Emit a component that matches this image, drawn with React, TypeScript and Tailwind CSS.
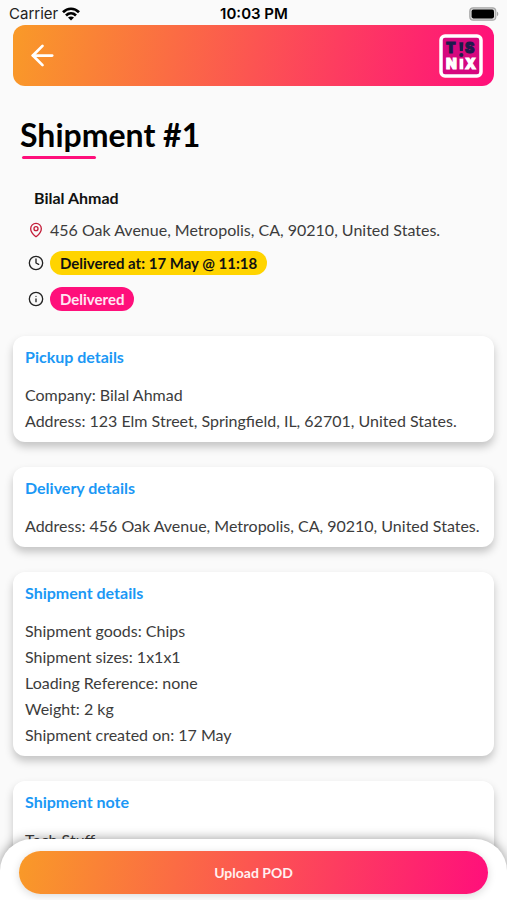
// Shipment detail screen — header, summary, detail cards and the upload bar

import type { ReactNode } from 'react';
import { ArrowLeft, Clock, Info, MapPin } from 'lucide-react';

interface DetailSection {
  title: string;
  lines: string[];
}

const SECTIONS: ReadonlyArray<DetailSection> = [
  {
    title: 'Pickup details',
    lines: ['Company: Bilal Ahmad', 'Address: 123 Elm Street, Springfield, IL, 62701, United States.'],
  },
  {
    title: 'Delivery details',
    lines: ['Address: 456 Oak Avenue, Metropolis, CA, 90210, United States.'],
  },
  {
    title: 'Shipment details',
    lines: [
      'Shipment goods: Chips',
      'Shipment sizes: 1x1x1',
      'Loading Reference: none',
      'Weight: 2 kg',
      'Shipment created on: 17 May',
    ],
  },
  { title: 'Shipment note', lines: ['Tech Stuff'] },
];

function WifiGlyph() {
  return (
    <svg width="18" height="14" viewBox="0 0 18 14" fill="none" stroke="#000" strokeWidth="2.7" aria-hidden="true">
      <path d="M1 5.2C5.6.6 12.4.6 17 5.2" />
      <path d="M4 8.5c2.9-2.8 7.1-2.8 10 0" />
      <path d="M9 13.6 6 10.6c1.7-1.6 4.3-1.6 6 0z" fill="#000" stroke="none" />
    </svg>
  );
}

function BatteryGlyph() {
  return (
    <svg width="30" height="14" viewBox="0 0 30 14" aria-hidden="true">
      <rect x="0.8" y="0.8" width="26" height="12.4" rx="3.5" fill="#d8d8d8" stroke="#a6a6a6" strokeWidth="1.2" />
      <rect x="2.6" y="2.6" width="22.4" height="8.8" rx="1.8" fill="#000" />
      <path d="M28 4.8c1.7.6 1.7 3.8 0 4.4z" fill="#a6a6a6" />
    </svg>
  );
}

function StatusBar() {
  return (
    <div className="grid h-[25px] shrink-0 grid-cols-3 items-center pt-0.5 pl-[9px] pr-2 font-['Inter',sans-serif] text-[15px] leading-5 text-[#222]">
      <div className="flex items-center gap-1">
        <span>Carrier</span>
        <WifiGlyph />
      </div>
      <span className="text-center font-semibold text-black">10:03 PM</span>
      <div className="flex justify-end">
        <BatteryGlyph />
      </div>
    </div>
  );
}

function Logo() {
  return (
    <svg width="44" height="44" viewBox="0 0 44 44" role="img" aria-label="Tisnix">
      <rect x="2" y="2" width="40" height="40" rx="4" fill="#d6087e" stroke="#fff" strokeWidth="3.5" />
      <g fontFamily="Inter, sans-serif" fontWeight="900" fontSize="14" strokeWidth="1">
        <text x="7" y="19" fill="#1d1b4c" stroke="#1d1b4c">T</text>
        <text x="26" y="19" fill="#1d1b4c" stroke="#1d1b4c">S</text>
        <text x="7" y="35" fill="#fff" stroke="#fff">N</text>
        <text x="26" y="35" fill="#fff" stroke="#fff">X</text>
      </g>
      <path d="M20.4 8.2h4l-.5 8.8h-3z" fill="#1d1b4c" />
      <circle cx="22.4" cy="21" r="2.1" fill="#1d1b4c" />
      <path d="M20.5 24.6h3.8v10.8h-3.8z" fill="#fff" />
    </svg>
  );
}

function Header() {
  return (
    <header className="mx-[13px] flex h-[61px] shrink-0 items-center justify-between rounded-xl bg-linear-[100deg] from-[#f99a28] to-[#ff0f7b] pl-[13px] pr-[11px]">
      <button type="button" aria-label="Back" className="text-white">
        <ArrowLeft size={33} strokeWidth={2} />
      </button>
      <Logo />
    </header>
  );
}

function SummaryRow({ icon, children }: { icon: ReactNode; children: ReactNode }) {
  return (
    <div className="flex items-center gap-1.5">
      {icon}
      {children}
    </div>
  );
}

function Summary() {
  return (
    <section className="px-7 pt-[27px]">
      <p className="pl-1.5 text-base leading-6 font-bold text-[#111]">Bilal Ahmad</p>
      <div className="mt-2 flex flex-col">
        <SummaryRow icon={<MapPin size={16} strokeWidth={2} className="shrink-0 text-[#c41e3a]" />}>
          <span className="text-base leading-6 text-[#3c3c3c]">456 Oak Avenue, Metropolis, CA, 90210, United States.</span>
        </SummaryRow>
        <div className="mt-[9px] flex flex-col gap-3">
          <SummaryRow icon={<Clock size={16} strokeWidth={2} className="shrink-0 text-[#222]" />}>
            <span className="rounded-full bg-[#ffd400] px-2.5 text-[15px] leading-6 font-bold text-[#111]">
              Delivered at: 17 May @ 11:18
            </span>
          </SummaryRow>
          <SummaryRow icon={<Info size={16} strokeWidth={2} className="shrink-0 text-[#222]" />}>
            <span className="rounded-full bg-[#ff0f7b] px-2.5 text-[15px] leading-6 font-bold text-[#ffe6f2]">Delivered</span>
          </SummaryRow>
        </div>
      </div>
    </section>
  );
}

function DetailCard({ title, lines }: DetailSection) {
  return (
    <section className="rounded-xl bg-white px-3 py-2 shadow-[0_5px_8px_rgba(0,0,0,0.22)]">
      <h2 className="text-base leading-[26px] font-bold text-[#1b98f5]">{title}</h2>
      <div className="mt-3 text-base leading-[26px] text-[#3c3c3c]">
        {lines.map((line) => (
          <p key={line}>{line}</p>
        ))}
      </div>
    </section>
  );
}

export default function App() {
  return (
    <div className="flex h-dvh flex-col overflow-hidden bg-[#fafafa] font-['Lato',sans-serif]">
      <StatusBar />
      <Header />
      <main className="min-h-0 flex-1 overflow-y-auto pb-12 [scrollbar-width:none]">
        <div className="px-5 pt-[29px]">
          <h1 className="text-[32px] leading-10 font-bold text-black">Shipment #1</h1>
          <div className="mt-px ml-0.5 h-[3px] w-[74px] rounded-full bg-[#ff0f7b]" />
        </div>
        <Summary />
        <div className="mx-[13px] mt-[25px] flex flex-col gap-[25px]">
          {SECTIONS.map((section) => (
            <DetailCard key={section.title} {...section} />
          ))}
        </div>
      </main>
      <footer className="relative -mt-8 shrink-0 rounded-t-[32px] bg-white px-[19px] pt-3 pb-1.5 shadow-[0_0_12px_rgba(0,0,0,0.4)]">
        <button
          type="button"
          className="h-[43px] w-full rounded-full bg-linear-[100deg] from-[#f99a28] to-[#ff0f7b] text-sm font-bold text-[#fff0f0] shadow-[0_2px_8px_rgba(0,0,0,0.15)]"
        >
          Upload POD
        </button>
      </footer>
    </div>
  );
}
